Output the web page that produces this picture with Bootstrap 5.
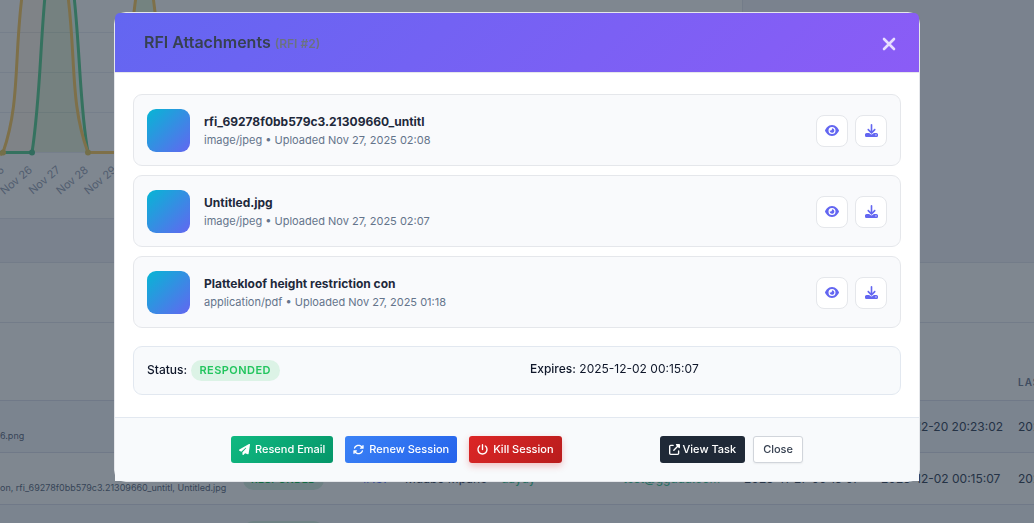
<!DOCTYPE html>
<html lang="en">
<head>
<meta charset="utf-8">
<meta name="viewport" content="width=device-width, initial-scale=1">
<title>RFI Attachments</title>
<link href="https://cdn.jsdelivr.net/npm/bootstrap@5.3.0/dist/css/bootstrap.min.css" rel="stylesheet">
<style>
  :root { --line: #e5e7eb; --ink: #1e293b; }
  body { font-family: Inter, "Liberation Sans", sans-serif; font-size: 12px; color: #0f172a; background: #f4f5fa; }
  .ico { width: 11px; height: 11px; fill: currentColor; flex: none; }

  /* dashboard behind the dialog */
  .dash { height: 100vh; overflow: hidden; }
  .chart-card { width: 743px; max-width: 72%; background: #fff; border-right: 1px solid #e6e8f0; border-bottom: 1px solid #e6e8f0; overflow: hidden; }
  .chart-card svg { display: block; }
  .chart-card text { font-size: 11px; fill: #a3abbd; }
  .log-panel { background: #fff; border-top: 1px solid #e6e8f0; margin-top: 43px; overflow: hidden; }
  .log-head { height: 60px; border-bottom: 1px solid #e6e8f0; }
  .log-table { table-layout: fixed; width: 1180px; margin: 0; white-space: nowrap; font-size: 12px; }
  .log-table > :not(caption) > * > * { padding: 2px 0 0; vertical-align: middle; border-bottom: 1px solid #e0e3ee; background: transparent; box-shadow: none; color: #4a566a; }
  .log-table th { height: 77px; padding-top: 42px !important; font-size: 10px; font-weight: 600; letter-spacing: 1px; color: #7f8a9f !important; }
  .log-table td { height: 52px; }
  .log-table .alt td { background: #f7f8fd; }
  .log-table .file-names { font-size: 9px; padding-top: 20px !important; color: #6f7a8e !important; }
  .log-table a { color: #5b74ff; text-decoration: none; }
  .log-table .mail, .log-table .mail a { color: #4ecb9d; }
  .log-table .pill { font-size: 10px; padding: 0 8px; }

  .modal-backdrop { --bs-backdrop-bg: #000f21; }

  /* dialog */
  .rfi-dialog { max-width: 806px; margin: 12px auto; }
  .rfi-dialog .modal-content { border: 1px solid var(--line); border-radius: 12px; }
  .rfi-dialog .modal-header { height: 59px; box-sizing: content-box; padding: 0 22px 0 29px; border-bottom: 1px solid var(--line); border-radius: 5px 5px 0 0; background: linear-gradient(135deg, #6366f1, #8b5cf6); }
  .rfi-dialog .modal-title { font-size: 16px; font-weight: 600; color: #374151; line-height: 20px; }
  .rfi-dialog .modal-title span { font-size: 12px; font-weight: 600; color: #6b7280; }
  .close-x { border: 0; background: none; padding: 0; width: 16px; height: 16px; color: #e8deff; display: flex; }
  .rfi-dialog .modal-body { padding: 21px 18px 22px; }
  .file-list { gap: 9px; }
  .file-row { padding: 14px 13px 13px; gap: 14px; border: 1px solid var(--line); border-radius: 9px; background: #f9fafc; }
  .file-thumb { width: 43px; height: 43px; border-radius: 9px; background: linear-gradient(135deg, #06b6d4, #6366f1); flex: none; }
  .file-name { font-size: 12px; line-height: 20px; font-weight: 700; color: var(--ink); }
  .file-meta { font-size: 11px; line-height: 17px; color: #64748b; }
  .acts { gap: 7px; }
  .act { width: 32px; height: 32px; padding: 0; border: 1px solid var(--line); border-radius: 8px; background: #fff; color: #6366f1; display: flex; align-items: center; justify-content: center; }
  .act .ico { width: 13px; height: 13px; }
  .act .eye { width: 14px; }
  .status-box { margin-top: 18px; border: 1px solid #e2e8f0; border-radius: 9px; background: #f8fafc; line-height: 18px; padding: 13px 0; }
  .status-box .col-6 { padding: 0 13px; }
  .status-box strong { font-weight: 500; }
  .pill { display: inline-block; border-radius: 11px; background: #dcf3e6; color: #22c55e; font-size: 11px; font-weight: 600; line-height: 21px; padding: 0 9px; letter-spacing: .04em; }
  .rfi-dialog .modal-footer { padding: 18px; border-top: 1px solid #e2e8f0; background: #f8fafc; border-radius: 0; }
  .modal-footer > * { margin: 0; }
  .tool-group { gap: 12px; }
  .tool { height: 27px; padding: 0 7px; font-size: 11px; font-weight: 500; line-height: 25px; border-radius: 3px; display: inline-flex; align-items: center; gap: 5px; color: #fff; border: 1px solid transparent; background-origin: border-box; }
  .tool:hover { color: #fff; }
  .tool-send { background-image: linear-gradient(135deg, #10b981, #059669); }
  .tool-renew { background-image: linear-gradient(135deg, #3b82f6, #2563eb); }
  .tool-kill { background-image: linear-gradient(135deg, #dc2626, #b91c1c); box-shadow: 0 3px 7px rgba(220, 38, 38, .28); }
  .tool-view { background: #1f2937; gap: 3px; padding: 0 8px; }
  .tool-close, .tool-close:hover { background: #fff; color: #374151; border-color: #d1d5db; box-shadow: 0 1px 2px rgba(0, 0, 0, .06); padding: 0 9px; }
</style>
</head>
<body>
<svg class="d-none">
  <symbol id="i-eye" viewBox="0 0 576 512"><path d="M288 32c-80.800 0-145.500 36.800-192.600 80.600C48.600 156 17.300 208 2.500 243.700c-3.300 7.900-3.300 16.700 0 24.600C17.300 304 48.600 356 95.400 399.400C142.500 443.200 207.200 480 288 480s145.500-36.800 192.600-80.600c46.800-43.500 78.100-95.400 93-131.100c3.300-7.900 3.300-16.700 0-24.600c-14.900-35.700-46.200-87.700-93-131.100C433.500 68.800 368.800 32 288 32zM144 256a144 144 0 1 1 288 0 144 144 0 1 1 -288 0zm144-64c0 35.300-28.700 64-64 64c-7.100 0-13.900-1.200-20.300-3.300c-5.500-1.800-11.900 1.600-11.700 7.400c.3 6.900 1.300 13.800 3.200 20.700c13.700 51.200 66.400 81.600 117.600 67.900s81.600-66.400 67.900-117.600c-11.100-41.500-47.800-69.400-88.600-71.100c-5.800-.2-9.200 6.100-7.400 11.700c2.100 6.400 3.300 13.200 3.300 20.300z"/></symbol>
  <symbol id="i-download" viewBox="0 0 512 512"><path d="M288 32c0-17.700-14.300-32-32-32s-32 14.300-32 32V274.700l-73.400-73.400c-12.500-12.500-32.800-12.500-45.300 0s-12.500 32.800 0 45.300l128 128c12.500 12.500 32.800 12.500 45.300 0l128-128c12.500-12.500 12.500-32.800 0-45.300s-32.800-12.500-45.300 0L288 274.700V32zM64 352c-35.300 0-64 28.700-64 64v32c0 35.300 28.700 64 64 64H448c35.300 0 64-28.700 64-64V416c0-35.300-28.700-64-64-64H346.500l-45.300 45.300c-25 25-65.500 25-90.500 0L165.500 352H64zm368 56a24 24 0 1 1 0 48 24 24 0 1 1 0-48z"/></symbol>
  <symbol id="i-send" viewBox="0 0 512 512"><path d="M498.100 5.600c10.100 7 15.400 19.100 13.500 31.200l-64 416c-1.500 9.700-7.400 18.200-16 23s-18.900 5.400-28 1.600L284 427.700l-68.500 74.100c-8.900 9.700-22.900 12.900-35.200 8.100S160 493.200 160 480V396.400c0-4 1.500-7.800 4.200-10.700L331.800 202.800c5.800-6.300 5.600-16-.4-22s-15.700-6.400-22-.7L106 360.800 17.700 316.600C7.100 311.300 .3 300.700 0 288.900s5.900-22.800 16.100-28.700l448-256c10.700-6.100 23.900-5.500 34 1.400z"/></symbol>
  <symbol id="i-renew" viewBox="0 0 512 512"><path d="M105.100 202.600c7.700-21.800 20.200-42.300 37.800-59.800c62.500-62.500 163.800-62.500 226.300 0L386.300 160H352c-17.700 0-32 14.300-32 32s14.300 32 32 32H463.900c17.700 0 32-14.300 32-32V80c0-17.700-14.300-32-32-32s-32 14.300-32 32v35.200L414.400 97.600c-87.500-87.500-229.300-87.500-316.800 0C73.200 122 55.600 150.700 44.800 181.400c-5.900 16.700 2.900 34.900 19.500 40.800s34.900-2.900 40.800-19.500zM39 289.300c-5 1.500-9.800 4.200-13.700 8.200c-4 4-6.700 8.800-8.100 14c-.3 1.200-.6 2.500-.8 3.800c-.3 1.700-.4 3.400-.4 5.100V432c0 17.700 14.300 32 32 32s32-14.300 32-32V396.900l17.600 17.500c87.500 87.400 229.300 87.400 316.700 0c24.400-24.400 42.100-53.100 52.900-83.700c5.900-16.700-2.900-34.900-19.500-40.800s-34.900 2.900-40.800 19.500c-7.700 21.800-20.200 42.300-37.800 59.800c-62.500 62.500-163.800 62.500-226.300 0l-.1-.1L125.600 352H160c17.700 0 32-14.300 32-32s-14.300-32-32-32H48.400c-1.600 0-3.200 .1-4.800 .3s-3.100 .5-4.600 1z"/></symbol>
  <symbol id="i-power" viewBox="0 0 512 512"><path d="M288 32c0-17.700-14.300-32-32-32s-32 14.300-32 32V256c0 17.700 14.300 32 32 32s32-14.300 32-32V32zM143.500 120.600c13.600-11.300 15.400-31.500 4.100-45.100s-31.500-15.400-45.100-4.100C49.700 115.400 16 181.800 16 256c0 132.500 107.500 240 240 240s240-107.500 240-240c0-74.200-33.800-140.600-86.600-184.600c-13.600-11.300-33.800-9.400-45.100 4.100s-9.400 33.800 4.100 45.100c38.900 32.300 63.500 81 63.500 135.400c0 97.200-78.800 176-176 176s-176-78.800-176-176c0-54.400 24.700-103.100 63.500-135.400z"/></symbol>
  <symbol id="i-open" viewBox="0 0 512 512"><path d="M352 0c-12.900 0-24.600 7.800-29.600 19.800s-2.200 25.700 6.900 34.900L370.700 96 201.400 265.400c-12.500 12.500-12.500 32.800 0 45.300s32.800 12.500 45.300 0L416 141.300l41.400 41.400c9.200 9.200 22.900 11.900 34.900 6.900s19.800-16.600 19.800-29.600V32c0-17.700-14.300-32-32-32H352zM80 32C35.800 32 0 67.800 0 112V432c0 44.200 35.800 80 80 80H400c44.200 0 80-35.800 80-80V320c0-17.700-14.300-32-32-32s-32 14.300-32 32V432c0 8.800-7.200 16-16 16H80c-8.800 0-16-7.200-16-16V112c0-8.800 7.200-16 16-16H192c17.700 0 32-14.300 32-32s-14.300-32-32-32H80z"/></symbol>
</svg>

<main class="dash" aria-hidden="true">
  <section class="chart-card">
    <svg width="743" height="218" viewBox="0 0 743 218">
      <path d="M0 32.500H743M0 72.500H743M0 112.500H743M0 152.500H743" stroke="#eceef4"/>
      <path d="M3 152C20 104 14 60 22 -4H68C76 60 70 104 88 152Z" fill="#f59e0b" fill-opacity=".08"/>
      <path d="M32 152C40 100 40 50 45 -4H74C80 50 80 110 88 152Z" fill="#22c55e" fill-opacity=".09"/>
      <path d="M134 12V-2H155V12Z" fill="#65c916" fill-opacity=".14"/>
      <g fill="none" stroke-width="3">
        <path d="M0 152.500H32C40 100 40 50 45 -4M74 -4C80 50 80 110 88 152.500" stroke="#6ad49c"/>
        <path d="M0 155L3 152.500C20 104 14 60 22 -4M68 -4C76 60 70 104 88 152.500H118M133 20L136 -4M153 -4L156 20" stroke="#fcd070"/>
      </g>
      <g fill="#62c99a"><circle cx="32" cy="152.500" r="3"/></g>
      <g fill="#e8cf70"><circle cx="3" cy="152.500" r="3"/><circle cx="88" cy="152.500" r="3"/></g>
      <g text-anchor="end">
        <text transform="translate(5 171) rotate(-40)">Nov 25</text>
        <text transform="translate(33 171) rotate(-40)">Nov 26</text>
        <text transform="translate(61 171) rotate(-40)">Nov 27</text>
        <text transform="translate(89 171) rotate(-40)">Nov 28</text>
        <text transform="translate(117 171) rotate(-40)">Nov 29</text>
      </g>
    </svg>
  </section>
  <section class="log-panel">
    <div class="log-head"></div>
    <table class="table log-table">
      <colgroup><col style="width:243px"><col style="width:120px"><col style="width:42px"><col style="width:96px"><col style="width:122px"><col style="width:121px"><col style="width:137px"><col style="width:137px"><col></colgroup>
      <thead><tr><th></th><th></th><th></th><th></th><th></th><th></th><th></th><th></th><th>LAST</th></tr></thead>
      <tbody>
        <tr class="alt"><td class="file-names">6.png</td><td></td><td></td><td></td><td></td><td></td><td></td><td>2025-12-20 20:23:02</td><td>2025-11-27</td></tr>
        <tr><td class="file-names">on, rfi_69278f0bb579c3.21309660_untitl, Untitled.jpg</td><td><span class="pill">RESPONDED</span></td><td><a href="#">#187</a></td><td>Mdabo Mpahe</td><td class="mail">dayuy</td><td class="mail"><a href="#">test@ggduu.com</a></td><td>2025-11-27 00:15:07</td><td>2025-12-02 00:15:07</td><td>2025-11-27</td></tr>
        <tr class="alt"><td></td><td><span class="pill">RESPONDED</span></td><td></td><td></td><td></td><td></td><td></td><td></td><td></td></tr>
      </tbody>
    </table>
  </section>
</main>

<div class="modal-backdrop show"></div>
<div class="modal show d-block" tabindex="-1" role="dialog" aria-labelledby="rfiTitle">
  <div class="modal-dialog rfi-dialog">
    <div class="modal-content">
      <div class="modal-header">
        <h5 class="modal-title" id="rfiTitle">RFI Attachments <span>(RFI #2)</span></h5>
        <button type="button" class="close-x" aria-label="Close dialog"><svg viewBox="0 0 16 16" width="16" height="16"><path d="M3 4L13 14M13 4L3 14" stroke="currentColor" stroke-width="2.600" stroke-linecap="round"/></svg></button>
      </div>
      <div class="modal-body">
        <div class="file-list d-flex flex-column">
          <div class="file-row d-flex align-items-center">
            <div class="file-thumb"></div>
            <div class="flex-grow-1"><div class="file-name">rfi_69278f0bb579c3.21309660_untitl</div><div class="file-meta">image/jpeg • Uploaded Nov 27, 2025 02:08</div></div>
            <div class="acts d-flex"><button type="button" class="act" aria-label="View"><svg class="ico eye"><use href="#i-eye"/></svg></button><button type="button" class="act" aria-label="Download"><svg class="ico"><use href="#i-download"/></svg></button></div>
          </div>
          <div class="file-row d-flex align-items-center">
            <div class="file-thumb"></div>
            <div class="flex-grow-1"><div class="file-name">Untitled.jpg</div><div class="file-meta">image/jpeg • Uploaded Nov 27, 2025 02:07</div></div>
            <div class="acts d-flex"><button type="button" class="act" aria-label="View"><svg class="ico eye"><use href="#i-eye"/></svg></button><button type="button" class="act" aria-label="Download"><svg class="ico"><use href="#i-download"/></svg></button></div>
          </div>
          <div class="file-row d-flex align-items-center">
            <div class="file-thumb"></div>
            <div class="flex-grow-1"><div class="file-name">Plattekloof height restriction con</div><div class="file-meta">application/pdf • Uploaded Nov 27, 2025 01:18</div></div>
            <div class="acts d-flex"><button type="button" class="act" aria-label="View"><svg class="ico eye"><use href="#i-eye"/></svg></button><button type="button" class="act" aria-label="Download"><svg class="ico"><use href="#i-download"/></svg></button></div>
          </div>
        </div>
        <div class="status-box"><div class="row g-0">
          <div class="col-6"><strong>Status:</strong> <span class="pill">RESPONDED</span></div>
          <div class="col-6"><strong>Expires:</strong> 2025-12-02 00:15:07</div>
        </div></div>
      </div>
      <div class="modal-footer justify-content-evenly">
        <div class="tool-group d-flex flex-wrap">
          <button type="button" class="btn tool tool-send"><svg class="ico"><use href="#i-send"/></svg>Resend Email</button>
          <button type="button" class="btn tool tool-renew"><svg class="ico"><use href="#i-renew"/></svg>Renew Session</button>
          <button type="button" class="btn tool tool-kill"><svg class="ico"><use href="#i-power"/></svg>Kill Session</button>
        </div>
        <div class="d-flex gap-2">
          <a href="#" class="btn tool tool-view"><svg class="ico"><use href="#i-open"/></svg>View Task</a>
          <button type="button" class="btn tool tool-close">Close</button>
        </div>
      </div>
    </div>
  </div>
</div>
<script src="https://cdn.jsdelivr.net/npm/bootstrap@5.3.0/dist/js/bootstrap.bundle.min.js"></script>
</body>
</html>
